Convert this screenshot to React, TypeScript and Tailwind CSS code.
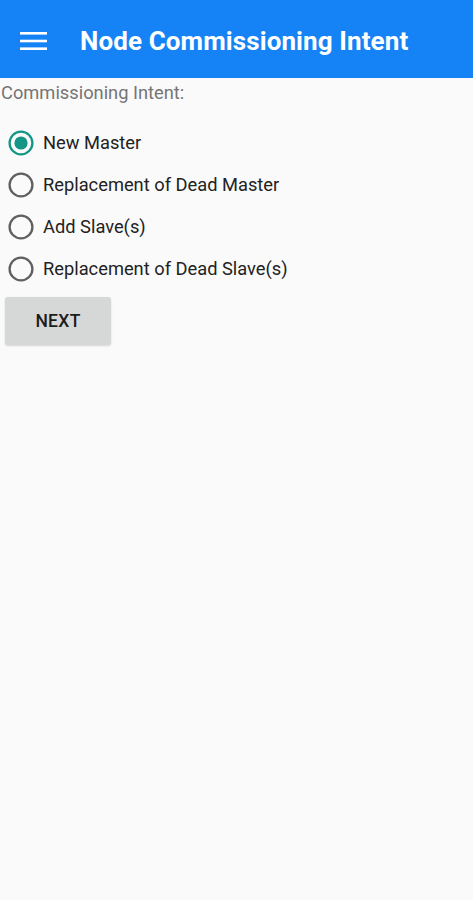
import React, { useState } from "react";

const options = [
  "New Master",
  "Replacement of Dead Master",
  "Add Slave(s)",
  "Replacement of Dead Slave(s)",
];

function Radio({ checked }: { checked: boolean }) {
  return (
    <svg width="28" height="28" viewBox="0 0 28 28">
      <circle
        cx="14"
        cy="14"
        r="11.4"
        fill="none"
        stroke={checked ? "#149686" : "#5f5f5f"}
        strokeWidth="2.3"
      />
      {checked && <circle cx="14" cy="14" r="6.6" fill="#149686" />}
    </svg>
  );
}

export default function App() {
  const [sel, setSel] = useState(0);
  return (
    <div
      className="w-[473px] h-[900px] bg-[#fafafa] flex flex-col"
      style={{ fontFamily: "Roboto, 'Noto Sans', sans-serif" }}
    >
      <div className="h-[78px] bg-[#1583f6] flex items-center shrink-0 pt-[4px]">
        <div className="w-[80px] pl-[20px] flex items-center">
          <svg width="27" height="20" viewBox="0 0 27 20">
            <rect x="0" y="1" width="27" height="2.6" fill="#fff" />
            <rect x="0" y="8.7" width="27" height="2.6" fill="#fff" />
            <rect x="0" y="16.4" width="27" height="2.6" fill="#fff" />
          </svg>
        </div>
        <div className="text-white text-[26px] font-bold leading-none tracking-[0.1px]">
          Node Commissioning Intent
        </div>
      </div>
      <div className="pl-[1px] pt-[3px] text-[18.3px] leading-[24px] text-[#757575]">
        Commissioning Intent:
      </div>
      <div className="flex flex-col pt-[17px]">
        {options.map((o, i) => (
          <div
            key={o}
            className="flex items-center h-[42px] pl-[7px] cursor-pointer"
            onClick={() => setSel(i)}
          >
            <Radio checked={sel === i} />
            <span className="ml-[8px] text-[18.3px] text-[#222222]">{o}</span>
          </div>
        ))}
      </div>
      <div className="pl-[5px] pt-[7px]">
        <button className="w-[106px] h-[48px] bg-[#d6d7d7] rounded-[3px] shadow-[0_1px_2px_rgba(0,0,0,0.15)] text-[17.5px] font-medium text-[#1c1c1c] tracking-[0.3px]">
          NEXT
        </button>
      </div>
    </div>
  );
}
